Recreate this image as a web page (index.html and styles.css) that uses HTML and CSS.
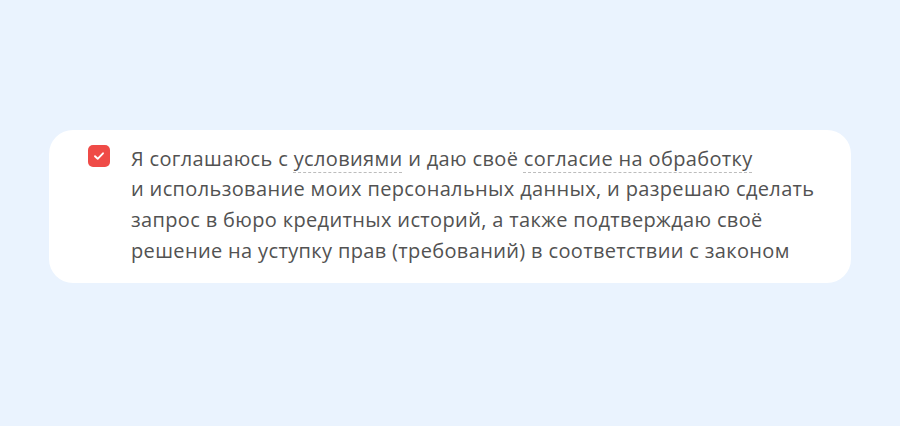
FILE: index.html
```html
<!DOCTYPE html>
<html lang="ru">
<head>
<meta charset="utf-8">
<link rel="stylesheet" href="styles.css">
</head>
<body>
<div class="page">
  <label class="card">
    <span class="check">
      <svg width="22" height="22" viewBox="0 0 22 22"><path d="M7 11.2 L9.7 13.8 L15 8.3" fill="none" stroke="#fff" stroke-width="1.9" stroke-linecap="round" stroke-linejoin="round"/></svg>
    </span>
    <span class="text">Я соглашаюсь с <span class="link">условиями</span> и даю своё <span class="link">согласие на обработку</span><br>и использование моих персональных данных, и разрешаю сделать<br>запрос в бюро кредитных историй, а также подтверждаю своё<br>решение на уступку прав (требований) в соответствии с законом</span>
  </label>
</div>
</body>
</html>
```
FILE: styles.css
```css
html, body {
  margin: 0;
  padding: 0;
  background: #eaf3fe;
}
.page {
  width: 900px;
  height: 426px;
  box-sizing: border-box;
  padding-bottom: 13px;
  display: flex;
  align-items: center;
  justify-content: center;
}
.card {
  box-sizing: border-box;
  width: 802px;
  background: #ffffff;
  border-radius: 24px;
  padding: 14px 20px 17px 39px;
  display: flex;
  gap: 21px;
  align-items: flex-start;
}
.check {
  flex: none;
  width: 22px;
  height: 22px;
  margin-top: 1px;
  border-radius: 5px;
  background: #ef4b47;
  display: flex;
}
.text {
  font-family: "Open Sans", sans-serif;
  font-size: 20px;
  letter-spacing: 0.35px;
  line-height: 30.7px;
  color: #525252;
  white-space: nowrap;
}
.link {
  text-decoration: underline dashed #bdbdbd;
  text-decoration-thickness: 1px;
  text-underline-offset: 6px;
}
```
